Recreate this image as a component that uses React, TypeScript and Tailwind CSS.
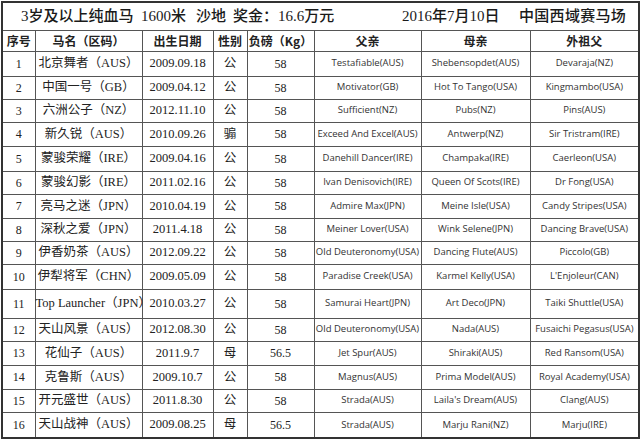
import React from "react";

type Row = {
  no: number;
  name: string;
  birth: string;
  sex: string;
  weight: string;
  sire: string;
  dam: string;
  damsire: string;
  h: string;
};

const rows: Row[] = [
  { no: 1, name: "北京舞者（AUS）", birth: "2009.09.18", sex: "公", weight: "58", sire: "Testafiable(AUS)", dam: "Shebensopdet(AUS)", damsire: "Devaraja(NZ)", h: "h-[25px]" },
  { no: 2, name: "中国一号（GB）", birth: "2009.04.12", sex: "公", weight: "58", sire: "Motivator(GB)", dam: "Hot To Tango(USA)", damsire: "Kingmambo(USA)", h: "h-[23px]" },
  { no: 3, name: "六洲公子（NZ）", birth: "2012.11.10", sex: "公", weight: "58", sire: "Sufficient(NZ)", dam: "Pubs(NZ)", damsire: "Pins(AUS)", h: "h-[23px]" },
  { no: 4, name: "新久锐（AUS）", birth: "2010.09.26", sex: "骟", weight: "58", sire: "Exceed And Excel(AUS)", dam: "Antwerp(NZ)", damsire: "Sir Tristram(IRE)", h: "h-[24px]" },
  { no: 5, name: "蒙骏荣耀（IRE）", birth: "2009.04.16", sex: "公", weight: "58", sire: "Danehill Dancer(IRE)", dam: "Champaka(IRE)", damsire: "Caerleon(USA)", h: "h-[25px]" },
  { no: 6, name: "蒙骏幻影（IRE）", birth: "2011.02.16", sex: "公", weight: "58", sire: "Ivan Denisovich(IRE)", dam: "Queen Of Scots(IRE)", damsire: "Dr Fong(USA)", h: "h-[23px]" },
  { no: 7, name: "亮马之迷（JPN）", birth: "2010.04.19", sex: "公", weight: "58", sire: "Admire Max(JPN)", dam: "Meine Isle(USA)", damsire: "Candy Stripes(USA)", h: "h-[24px]" },
  { no: 8, name: "深秋之爱（JPN）", birth: "2011.4.18", sex: "公", weight: "58", sire: "Meiner Lover(USA)", dam: "Wink Selene(JPN)", damsire: "Dancing Brave(USA)", h: "h-[23px]" },
  { no: 9, name: "伊香奶茶（AUS）", birth: "2012.09.22", sex: "公", weight: "58", sire: "Old Deuteronomy(USA)", dam: "Dancing Flute(AUS)", damsire: "Piccolo(GB)", h: "h-[23px]" },
  { no: 10, name: "伊犁将军（CHN）", birth: "2009.05.09", sex: "公", weight: "58", sire: "Paradise Creek(USA)", dam: "Karmel Kelly(USA)", damsire: "L'Enjoleur(CAN)", h: "h-[25px]" },
  { no: 11, name: "Top Launcher（JPN）", birth: "2010.03.27", sex: "公", weight: "58", sire: "Samurai Heart(JPN)", dam: "Art Deco(JPN)", damsire: "Taiki Shuttle(USA)", h: "h-[29px]" },
  { no: 12, name: "天山风景（AUS）", birth: "2012.08.30", sex: "公", weight: "58", sire: "Old Deuteronomy(USA)", dam: "Nada(AUS)", damsire: "Fusaichi Pegasus(USA)", h: "h-[23px]" },
  { no: 13, name: "花仙子（AUS）", birth: "2011.9.7", sex: "母", weight: "56.5", sire: "Jet Spur(AUS)", dam: "Shiraki(AUS)", damsire: "Red Ransom(USA)", h: "h-[24px]" },
  { no: 14, name: "克鲁斯（AUS）", birth: "2009.10.7", sex: "公", weight: "58", sire: "Magnus(AUS)", dam: "Prima Model(AUS)", damsire: "Royal Academy(USA)", h: "h-[24px]" },
  { no: 15, name: "开元盛世（AUS）", birth: "2011.8.30", sex: "公", weight: "58", sire: "Strada(AUS)", dam: "Laila's Dream(AUS)", damsire: "Clang(AUS)", h: "h-[23px]" },
  { no: 16, name: "天山战神（AUS）", birth: "2009.08.25", sex: "母", weight: "56.5", sire: "Strada(AUS)", dam: "Marju Rani(NZ)", damsire: "Marju(IRE)", h: "h-[26px]" },
];

const cjk = "font-['Liberation_Serif','Noto_Sans_CJK_SC',serif]";
const latin = "font-['Open_Sans','Noto_Sans',sans-serif]";
const cell = "border border-[#555] p-0 text-center align-middle";

export default function App() {
  return (
    <div className="w-[640px] h-[439px] bg-white text-[#222] overflow-hidden">
      <table className="ml-px mt-px border-collapse table-fixed w-[637px] border-2 border-[#333]">
        <colgroup>
          <col className="w-[33px]" />
          <col className="w-[107px]" />
          <col className="w-[71px]" />
          <col className="w-[34px]" />
          <col className="w-[67px]" />
          <col className="w-[107px]" />
          <col className="w-[109px]" />
          <col className="w-[109px]" />
        </colgroup>
        <thead>
          <tr className="h-[28px]">
            <th colSpan={8} className={`${cell} ${cjk} text-[15px] font-medium text-[#1a1a1a]`}>
              <div className="flex items-center pl-[18px] whitespace-nowrap">
                <span className="w-[120px] text-left">3岁及以上纯血马</span>
                <span className="w-[55px] text-left">1600米</span>
                <span className="w-[37px] text-left">沙地</span>
                <span className="w-[169px] text-left">奖金：16.6万元</span>
                <span className="w-[117px] text-left">2016年7月10日</span>
                <span className="text-left tracking-[0.3px]">中国西域赛马场</span>
              </div>
            </th>
          </tr>
          <tr className="h-[21px]">
            {["序号", "马名（区码）", "出生日期", "性别", "负磅（Kg）", "父亲", "母亲", "外祖父"].map((t) => (
              <th key={t} className={`${cell} font-['Noto_Sans_CJK_SC',sans-serif] text-[12px] font-bold leading-none`}>
                {t}
              </th>
            ))}
          </tr>
        </thead>
        <tbody>
          {rows.map((r) => (
            <tr key={r.no} className={r.h}>
              <td className={`${cell} ${cjk} text-[12px]`}>{r.no}</td>
              <td className={`${cell} ${cjk} text-[12.5px] whitespace-nowrap`}>{r.name}</td>
              <td className={`${cell} ${cjk} text-[12.5px]`}>{r.birth}</td>
              <td className={`${cell} ${cjk} text-[12.5px]`}>{r.sex}</td>
              <td className={`${cell} ${cjk} text-[12px]`}>{r.weight}</td>
              <td className={`${cell} ${latin} text-[9.5px] text-[#333] whitespace-nowrap`}>{r.sire}</td>
              <td className={`${cell} ${latin} text-[9.5px] text-[#333] whitespace-nowrap`}>{r.dam}</td>
              <td className={`${cell} ${latin} text-[9.5px] text-[#333] whitespace-nowrap`}>{r.damsire}</td>
            </tr>
          ))}
        </tbody>
      </table>
    </div>
  );
}
